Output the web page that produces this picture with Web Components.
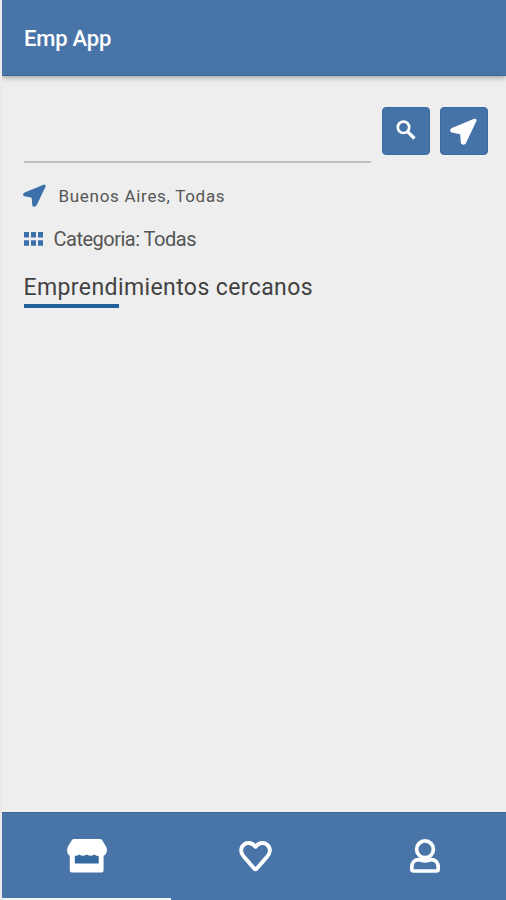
<!DOCTYPE html>
<html lang="es"><head><meta charset="utf-8"><title>Emp App</title>
<style>
html,body{margin:0;height:100%;background:#eee}
body{font-family:Roboto,"Liberation Sans",sans-serif;color:#555;overflow:hidden}
</style></head><body>
<emp-app></emp-app>
<script>
const icons={
arrow:'<svg viewBox="0 0 28 28"><path fill="currentColor" d="M25 .8 2 10.300C-.4 11.300-.4 14.700 2 15l8.600 1.800.6 8.700c.3 2.600 4.200 2.900 5.400.5L27.400 3.200c.7-1.700-.7-3-2.400-2.400Z"/></svg>',
search:'<svg viewBox="0 0 20 20"><circle cx="7.500" cy="7.300" r="5.700" fill="none" stroke="currentColor" stroke-width="2.700"/><path d="m11.300 11.300 7.200 7.200" stroke="currentColor" stroke-width="3.300"/></svg>',
grid:'<svg viewBox="0 0 19 14"><path fill="currentColor" d="M0 0h5v5.500H0zm7 0h5v5.500H7zm7 0h5v5.500h-5zM0 8.300h5v5.500H0zm7 0h5v5.500H7zm7 0h5v5.500h-5z"/></svg>',
store:'<svg viewBox="0 0 40 34"><path fill="#fff" d="M7 0h26q1.400 0 2.200 1.200l3.800 6.200c2 3.700.6 8.200-2.400 9.400v14.700q0 2-2 2H4.800q-2 0-2-2V16.800C-.2 15.300-.4 10.700 1 7.500L4.800 1.200Q5.600 0 7 0Z"/><path fill="#35699f" d="M7.800 16.800q3 .2 4.500-1.200 3.500 2.500 7.500 0 4 2.500 7.500 0 2 1.600 4.400 1.200v7q0 .6-.6.6H8.400q-.6 0-.6-.6Z"/></svg>',
heart:'<svg viewBox="0 0 33 32"><path fill="none" stroke="#fff" stroke-width="3.900" stroke-linejoin="round" d="M16.500 5.800C13 1.200 7.800 1 4.800 3.800 1.200 7 1.300 12 4.700 15.500l10.500 12q1.300 1.600 2.600 0l10.500-12C31.700 12 31.800 7 28.200 3.800 25.200 1 20 1.200 16.500 5.800Z"/></svg>',
person:'<svg viewBox="0 0 30 34"><g fill="none" stroke="#fff" stroke-width="3.700"><circle cx="15" cy="10.300" r="8.400"/><path stroke-linejoin="round" d="M8.300 20.600C4.200 20.700 1.800 24 1.800 28v2q0 2 2 2h22.400q2 0 2-2v-2c0-4-2.400-7.300-6.500-7.400-4.800 1.700-8.600 1.700-13.400 0Z"/></g></svg>'};
const define=(name,html)=>customElements.define(name,class extends HTMLElement{
 constructor(){super();this.attachShadow({mode:'open'}).innerHTML=typeof html==='function'?html(this):html}
});
define('emp-icon',e=>`<style>:host{display:block;flex:none}svg{display:block;width:100%;height:100%;overflow:visible}</style>${icons[e.getAttribute('name')]}`);
define('app-header',`<style>:host{display:flex;align-items:center;height:76px;flex:none;box-sizing:border-box;padding:2px 0 0 22px;background:#4874a8;border-bottom:1px solid #386798;box-shadow:0 2px 5px #0000004d;color:#fff;font-size:22px;font-weight:500;letter-spacing:-.2px}</style><slot></slot>`);
define('icon-button',`<style>:host{display:block}button{display:flex;align-items:center;justify-content:center;width:48px;height:48px;padding:0;border:1px solid #376a9f;border-radius:4px;background:#4573a8;color:#fff}</style><button><slot></slot></button>`);
define('search-row',`<style>:host{display:flex;align-items:flex-start;height:57px}input{width:347px;height:56px;box-sizing:border-box;border:0;border-bottom:2px solid #bdbdbd;background:none;outline:0;margin-right:11px;padding:0}icon-button+icon-button{margin-left:10px}.s{width:20px;height:20px;margin-top:-2px}.a{width:27px;height:27px;margin:1px 0 0 -1px}</style><input aria-label="Buscar"><icon-button><emp-icon class="s" name="search"></emp-icon></icon-button><icon-button><emp-icon class="a" name="arrow"></emp-icon></icon-button>`);
define('filter-row',`<style>:host{display:flex;align-items:center;white-space:nowrap;height:44px}::slotted(emp-icon){color:#3c70ab}</style><slot name="icon"></slot><slot></slot>`);
define('section-title',`<style>:host{display:block;height:34px;font-size:23px;line-height:28px;letter-spacing:.4px;white-space:nowrap;color:#424242}i{display:block;width:95px;height:4px;margin-top:2px;background:#1f6199}</style><slot></slot><i></i>`);
define('tab-bar',`<style>:host{display:grid;grid-template-columns:169px 169px 170px;height:88px;flex:none;box-sizing:border-box;background:#4874a8;border-top:1px solid #386798;margin-top:auto}div{box-sizing:border-box;display:flex;justify-content:center;padding-top:26px;border-bottom:2px solid transparent}.on{border-color:#f1f5f8}.st{width:40px;height:34px}.h{width:33px;height:32px;margin-top:2px}.p{width:30px;height:34px}</style><div class="on"><emp-icon class="st" name="store"></emp-icon></div><div><emp-icon class="h" name="heart"></emp-icon></div><div><emp-icon class="p" name="person"></emp-icon></div>`);
define('emp-app',`<style>:host{display:flex;flex-direction:column;height:900px;width:506px;box-sizing:border-box;border-left:2px solid #eaeaea;overflow:hidden}main{padding:31px 0 0 21.500px}.loc{font-size:17px;letter-spacing:.7px;margin-top:9px}.loc span{padding-top:1px}.loc emp-icon{width:23px;height:23px;margin-right:13px;margin-left:-1px}.cat{font-size:20px;letter-spacing:-.5px}.cat emp-icon{width:19px;height:14px;margin-right:11px}section-title{margin-top:13px}</style>
<app-header>Emp App</app-header><main><search-row></search-row><filter-row class="loc"><emp-icon slot="icon" name="arrow"></emp-icon><span>Buenos Aires, Todas</span></filter-row><filter-row class="cat"><emp-icon slot="icon" name="grid"></emp-icon><span>Categoria: Todas</span></filter-row><section-title>Emprendimientos cercanos</section-title></main><tab-bar></tab-bar>`);
</script></body></html>
